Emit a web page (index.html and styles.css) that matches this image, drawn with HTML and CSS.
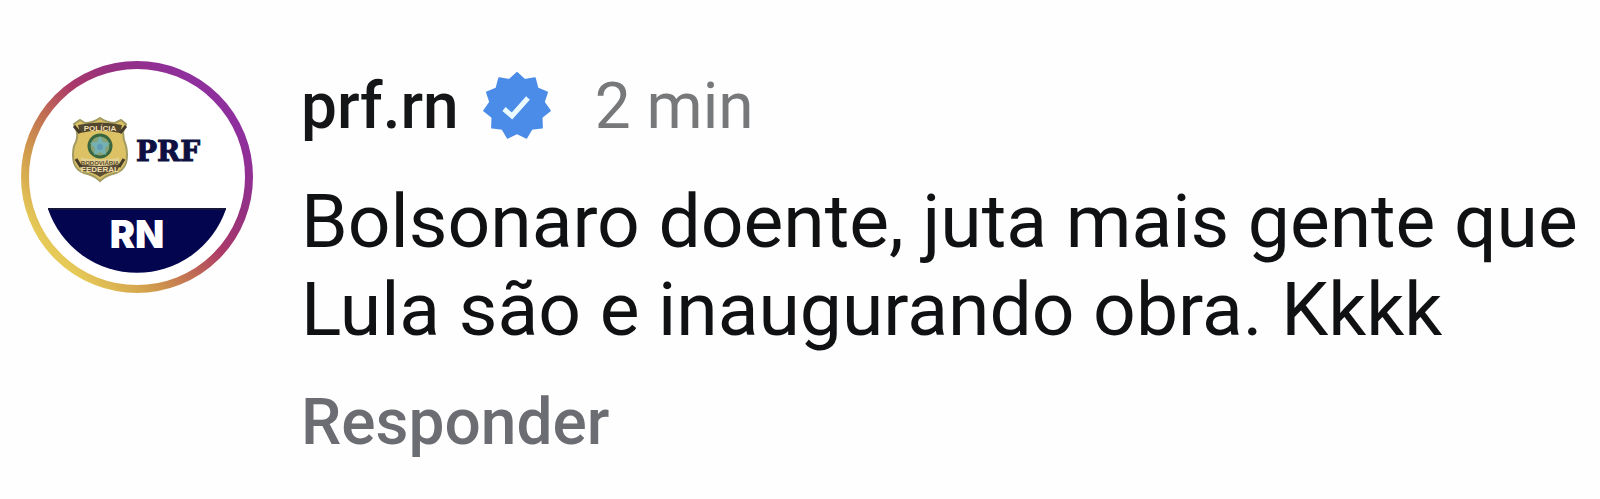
FILE: index.html
```html
<!DOCTYPE html>
<html lang="pt-BR">
<head>
<meta charset="utf-8">
<meta name="viewport" content="width=device-width, initial-scale=1">
<title>Comentário</title>
<link rel="stylesheet" href="styles.css">
</head>
<body>
<article class="comment">
  <a class="avatar" href="#" aria-label="prf.rn">
    <svg class="avatar-art" viewBox="0 0 234 234" aria-hidden="true">
      <defs>
        <linearGradient id="ring" x1="0.12" y1="0.82" x2="0.84" y2="0.16">
          <stop offset="0" stop-color="#e6ca58"/>
          <stop offset="0.22" stop-color="#d09a4c"/>
          <stop offset="0.4" stop-color="#c06a54"/>
          <stop offset="0.56" stop-color="#ac3a68"/>
          <stop offset="0.75" stop-color="#953080"/>
          <stop offset="1" stop-color="#8f2f9e"/>
        </linearGradient>
      </defs>
      <circle cx="117" cy="117" r="112" fill="#fff" stroke="url(#ring)" stroke-width="8"/>
      <path d="M28 149H206A94 94 0 0 1 28 149Z" fill="#04054f"/>
      <path d="M28 149H206" stroke="#14163a" stroke-width="2"/>
      <g>
        <path d="M54 64 60 60 65 63Q73 63 80 58Q87 63 95 63L101 60 106 64 103 72Q103 79 106 86Q108 95 106 103Q103 111 96 113Q86 115 80 121Q74 115 64 113Q57 111 54 103Q52 95 54 86Q58 79 57 72Z" fill="#dcc265" stroke="#a39a62" stroke-width="2"/>
        <path d="M58 65Q80 60 102 65L100 73Q80 68 60 73Z" fill="#51472f"/>
        <path d="M60 105Q80 101 100 105L97 111Q87 112 80 117Q73 112 63 111Z" fill="#5a4f36"/>
        <path d="M54 66 60 73M106 66 100 73M56 99 61 107M104 99 99 107" stroke="#453b2d" stroke-width="3"/>
        <path d="M61 98Q80 101 99 98V104Q80 108 61 104Z" fill="#e2d193"/>
        <circle cx="80" cy="86" r="11" fill="#86a277" stroke="#38663f" stroke-width="3"/>
        <path d="M80 76 83 82 90 83 85 88 86 95 80 92 74 95 75 88 70 83 77 82Z" fill="#72b2b4"/>
        <circle cx="80" cy="87" r="3" fill="#619bb5"/>
        <text class="shield-text" x="80" y="71">POLÍCIA</text>
        <text class="shield-text shield-text-dark" x="80" y="105">RODOVIÁRIA</text>
        <text class="shield-text" x="80" y="112">FEDERAL</text>
      </g>
      <text class="force" x="116" y="101">PRF</text>
      <text class="state" x="117" y="188">RN</text>
    </svg>
  </a>
  <div class="body">
    <header class="meta">
      <a class="user" href="#">prf.rn</a>
      <svg class="verified" viewBox="-34 -34 68 68" role="img" aria-label="Verificado">
        <path d="M0-33 7.6-25.9 17.8-27.8 20.4-17.7 30-13.7 26.7-3.8 32.7 4.7 24.5 11.2 24.9 21.6 14.6 22.7 9.3 31.7 0 27-9.3 31.7-14.6 22.7-24.9 21.6-24.5 11.2-32.7 4.7-26.7-3.8-30-13.7-20.4-17.7-17.8-27.8-7.6-25.9Z" fill="#4b8ce8" stroke="#4b8ce8" stroke-width="2" stroke-linejoin="round"/>
        <path d="M-13 3-5 10 11-8" fill="none" stroke="#e9fbff" stroke-width="5"/>
      </svg>
      <time class="time">2 min</time>
    </header>
    <p class="text">Bolsonaro doente, juta mais gente que Lula são e inaugurando obra. Kkkk</p>
    <button class="reply" type="button">Responder</button>
  </div>
</article>
</body>
</html>
```
FILE: styles.css
```css
body {
  margin: 0;
  background: #fefefe;
  color: #101112;
  font-family: Roboto, "Liberation Sans", sans-serif;
}

.comment {
  display: flex;
  align-items: flex-start;
  gap: 47px;
  padding: 60px 12px 40px 20px;
}

.avatar {
  flex: none;
  width: 234px;
}

.avatar-art {
  display: block;
  width: 100%;
}

.force {
  font: bold 28px "DejaVu Serif", serif;
  fill: #0d1040;
  stroke: #0d1040;
  stroke-width: 1px;
}

.state {
  font: 900 38px Inter, sans-serif;
  fill: #fff;
  text-anchor: middle;
}

.shield-text {
  font: bold 8px "Liberation Sans", sans-serif;
  fill: #f2deb0;
  text-anchor: middle;
}

.shield-text-dark {
  font-size: 6px;
  fill: #5b4b2c;
}

.body {
  flex: 1;
  min-width: 0;
}

.meta {
  display: flex;
  align-items: center;
  height: 92px;
}

.user {
  color: #151617;
  font-size: 64px;
  font-weight: 500;
  text-decoration: none;
}

.verified {
  flex: none;
  width: 68px;
  margin: 0 44px 0 24px;
}

.time {
  color: #77787a;
  font-size: 64px;
}

.text {
  margin: 25px 0 0;
  font-size: 75px;
  line-height: 88px;
}

.reply {
  display: block;
  margin: 34px 0 0;
  padding: 0;
  border: 0;
  background: none;
  color: #6c6d72;
  font: 500 64px/72px Roboto, "Liberation Sans", sans-serif;
  cursor: pointer;
}
```
